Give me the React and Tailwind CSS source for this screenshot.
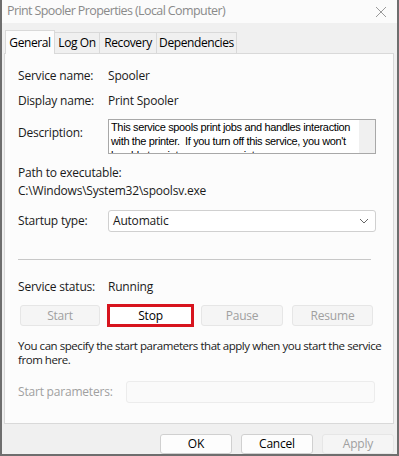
const ui = { fontFamily: '"Open Sans", "Noto Sans", sans-serif' }
const ms = { fontFamily: '"Liberation Sans", Arial, sans-serif' }

function Btn({ children, disabled, highlight, className = '' }) {
  if (highlight) {
    return (
      <div className={`border-[3px] border-[#d7141e] bg-white flex items-center justify-center text-[12px] text-black ${className}`}>
        {children}
      </div>
    )
  }
  return (
    <div className={`border rounded-[3px] flex items-center justify-center text-[12px] ${disabled ? 'border-[#e6e6e6] bg-[#f5f5f5] text-[#a0a0a0]' : 'border-[#d0d0d0] bg-[#fdfdfd] text-black'} ${className}`}>
      {children}
    </div>
  )
}

function Row({ label, value, className = '' }) {
  return (
    <div className={`flex items-center text-[12px] text-[#1a1a1a] ${className}`}>
      <span className="w-[90px]">{label}</span>
      <span>{value}</span>
    </div>
  )
}

export default function App() {
  const tabs = [['Log On', 'w-[45px]'], ['Recovery', 'w-[57px]'], ['Dependencies', 'w-[80px]']]
  return (
    <div style={ui} className="w-[399px] h-[456px] bg-[#f0f0f0] border-x-2 border-b-2 border-[#6e6e6e] flex flex-col overflow-hidden tracking-[-0.2px]">
      <div className="h-[23px] shrink-0 bg-[#fbfbfb] flex items-center justify-between pl-[5px] pr-[8px]">
        <span className="text-[12.5px] text-[#8a8a8a] tracking-[-0.6px]">Print Spooler Properties (Local Computer)</span>
        <svg width="12" height="12" viewBox="0 0 12 12" className="mr-[2px]">
          <path d="M1 1 L11 11 M11 1 L1 11" stroke="#9a9a9a" strokeWidth="1" />
        </svg>
      </div>

      <div className="flex items-end pl-[3px] pt-[6px] h-[30px] shrink-0 tracking-[-0.4px]">
        <div className="w-[50px] h-[24px] flex items-center justify-center bg-[#fcfcfc] border border-b-0 border-[#d9d9d9] text-[12px] text-black relative top-[1px] z-10">
          General
        </div>
        {tabs.map(([t, w]) => (
          <div key={t} className={`${w} h-[21px] flex items-center justify-center bg-[#f0f0f0] border border-l-0 border-b-0 border-[#d9d9d9] text-[12px] text-black`}>
            {t}
          </div>
        ))}
      </div>

      <div className="mx-[2px] mr-[3px] h-[371px] shrink-0 bg-[#fcfcfc] border border-[#d9d9d9] px-[13px] pt-[12px] flex flex-col">
        <Row label="Service name:" value="Spooler" className="h-[20px]" />
        <Row label="Display name:" value="Print Spooler" className="h-[20px] mt-[5px]" />

        <div className="flex mt-[8px] text-[12px] text-[#1a1a1a]">
          <span className="w-[90px] pt-[5px]">Description:</span>
          <div className="w-[268px] h-[35px] border border-[#a8a8a8] bg-white flex overflow-hidden">
            <div style={ms} className="flex-1 pl-[2px] text-[11px] leading-[14px] text-black overflow-hidden tracking-[-0.35px]">
              This service spools print jobs and handles interaction with the printer.&nbsp; If you turn off this service, you won't be able to print or see your printers.
            </div>
            <div className="w-[16px] bg-[#f0f0f0]" />
          </div>
        </div>

        <div className="text-[12px] text-[#1a1a1a] mt-[10px] leading-[18px]">Path to executable:</div>
        <div className="text-[12px] text-[#1a1a1a] leading-[18px]">C:\Windows\System32\spoolsv.exe</div>

        <div className="flex items-center mt-[10px] text-[12px] text-[#1a1a1a]">
          <span className="w-[90px]">Startup type:</span>
          <div className="w-[268px] h-[22px] border border-[#d0d0d0] rounded-[3px] bg-white flex items-center justify-between pl-[4px] pr-[6px]">
            <span>Automatic</span>
            <svg width="10" height="6" viewBox="0 0 10 6">
              <path d="M1 1 L5 5 L9 1" fill="none" stroke="#666" strokeWidth="1" />
            </svg>
          </div>
        </div>

        <div className="mt-[27px] h-px w-[353px] bg-[#c8c8c8]" />

        <Row label="Service status:" value="Running" className="h-[20px] mt-[17px]" />

        <div className="flex gap-[7px] mt-[8px] pl-[2px]">
          <Btn disabled className="w-[80px] h-[21px]">Start</Btn>
          <Btn highlight className="w-[87px] h-[23px] -my-[1px]">Stop</Btn>
          <Btn disabled className="w-[82px] h-[21px]">Pause</Btn>
          <Btn disabled className="w-[81px] h-[21px] ml-[2px]">Resume</Btn>
        </div>

        <div className="mt-[13px] text-[11.5px] leading-[14px] text-[#1a1a1a] w-[380px] tracking-[-0.45px]">
          You can specify the start parameters that apply when you start the service from here.
        </div>

        <div className="flex items-center mt-[14px] text-[12px] text-[#a0a0a0]">
          <span className="w-[108px]">Start parameters:</span>
          <div className="w-[249px] h-[22px] border border-[#ececec] rounded-[3px] bg-[#fafafa]" />
        </div>
      </div>

      <div className="flex justify-end gap-[9px] pr-[3px] pt-[10px]">
        <Btn className="w-[72px] h-[20px]">OK</Btn>
        <Btn className="w-[72px] h-[20px]">Cancel</Btn>
        <Btn disabled className="w-[72px] h-[20px]">Apply</Btn>
      </div>
    </div>
  )
}
